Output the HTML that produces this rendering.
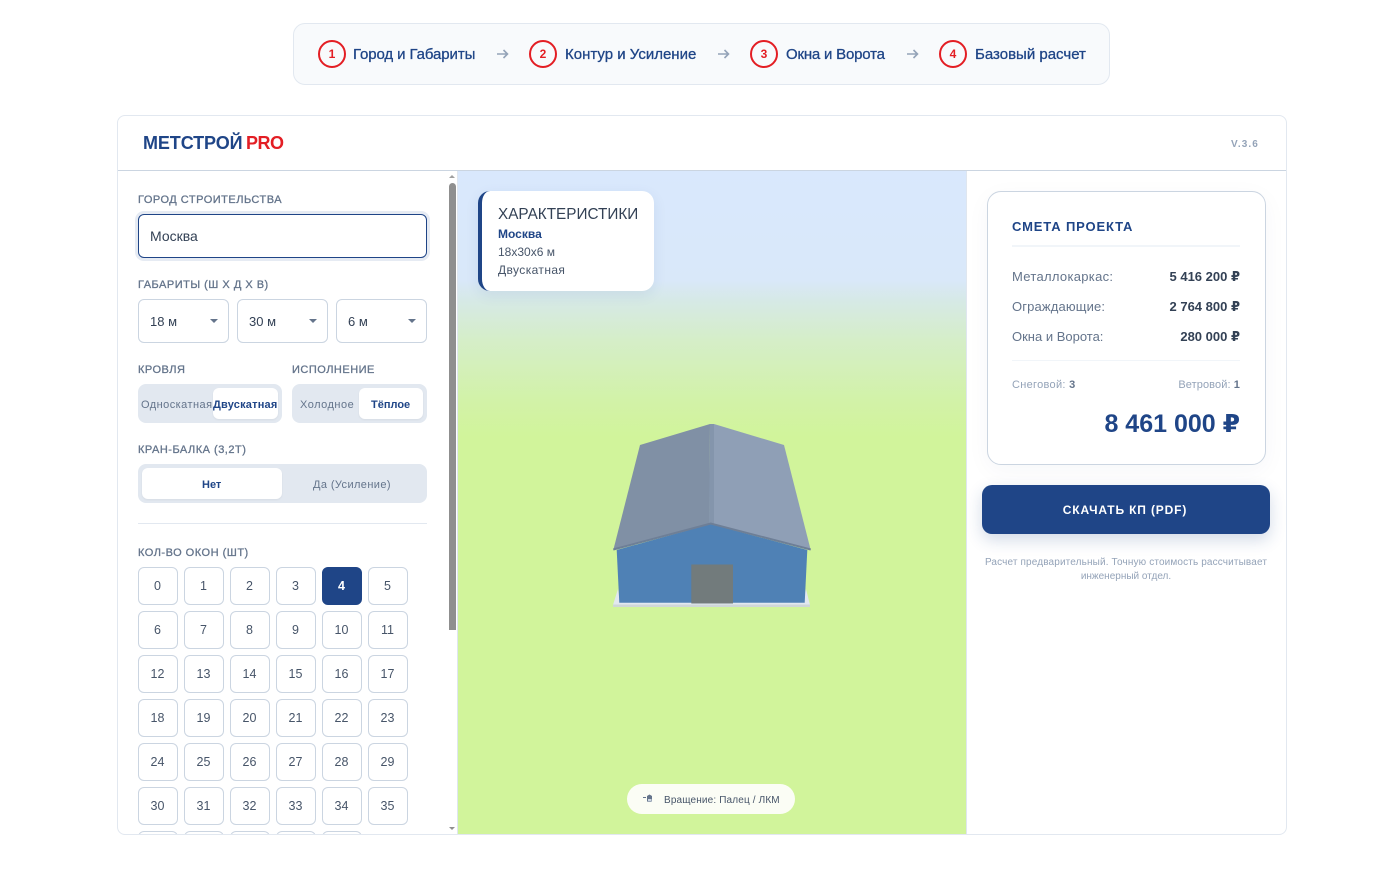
<!DOCTYPE html>
<html lang="ru"><head><meta charset="utf-8"><title>Метстрой PRO</title>
<style>
*{box-sizing:border-box}
html,body{margin:0;padding:0;background:#fff;width:1378px;height:870px;overflow:hidden;font-family:"Liberation Sans","DejaVu Sans",sans-serif}
.a{position:absolute}
.t{position:absolute;white-space:nowrap;line-height:16px;height:16px}
.lb{font-size:11px;color:#64748b;letter-spacing:.5px;-webkit-text-stroke:.3px #64748b}
.step{font-size:15px;color:#1f4587;-webkit-text-stroke:.3px #1f4587}
.c{position:absolute;top:40px;width:28px;height:28px;border:2px solid #e31e24;border-radius:50%;color:#e31e24;font-size:12px;font-weight:700;text-align:center;line-height:25px}
.sel{position:absolute;top:299px;width:91px;height:44px;border:1px solid #cbd5e1;border-radius:6px;background:#fff}
.sel span{position:absolute;left:11px;top:14px;font-size:13px;line-height:16px;color:#334155}
.sel i{position:absolute;left:71px;top:19px;border-left:4.5px solid transparent;border-right:4.5px solid transparent;border-top:4.5px solid #64748b}
.tg{position:absolute;background:#e2e8f0;border-radius:8px;height:39px}
.on{position:absolute;background:#fff;border-radius:6px;height:31px;box-shadow:0 1px 2px rgba(0,0,0,.05)}
.g{position:absolute;width:40px;height:38px;border:1px solid #cbd5e1;border-radius:6px;background:#fff;text-align:center;line-height:36px;font-size:12.5px;color:#475569;padding-right:1px}
.g.s{background:#1f4587;border-color:#1f4587;color:#fff;font-weight:700}
.rl{font-size:13px;color:#64748b;left:1012px;letter-spacing:.15px}
.rv{font-size:13px;color:#334155;font-weight:700;right:138px}
</style></head><body>

<div class="a" style="left:293px;top:23px;width:817px;height:62px;background:#f8fafc;border:1px solid #e2e8f0;border-radius:12px"></div>
<div class="c" style="left:318px">1</div><div class="t step" style="left:353px;top:47px;letter-spacing:-.1px">Город и Габариты</div>
<div class="c" style="left:529px">2</div><div class="t step" style="left:565px;top:47px">Контур и Усиление</div>
<div class="c" style="left:750px">3</div><div class="t step" style="left:786px;top:47px;letter-spacing:-.2px">Окна и Ворота</div>
<div class="c" style="left:939px">4</div><div class="t step" style="left:975px;top:47px">Базовый расчет</div>
<svg class="a" style="left:0;top:0" width="1378" height="90" fill="none" stroke="#94a3b8" stroke-width="1.6"><path d="M497 54h10.500M503.500 50l4 4-4 4M718 54h10.500M724.500 50l4 4-4 4M907 54h10.500M913.500 50l4 4-4 4"/></svg>

<div class="a" style="left:117px;top:115px;width:1170px;height:720px;background:#fff;border:1px solid #e2e8f0;border-radius:8px;overflow:hidden">
  <div class="a" style="left:0;top:54px;width:1168px;height:1px;background:#cbd5e1"></div>
  <div class="a" style="left:339px;top:55px;width:510px;height:664px;background:linear-gradient(180deg,#d9e8fd 0,#d9e8f9 16.500%,#d6e9e6 19.500%,#d5eec8 25.500%,#d2f2a8 34.500%,#d1f49b 40%,#d1f49b 100%);border-left:1px solid #dfe6ef;border-right:1px solid #dfe6ef"></div>
</div>

<div class="t" style="left:143px;top:132px;height:22px;line-height:22px;font-size:18px;font-weight:700;color:#1f4587;letter-spacing:-.1px">МЕТСТРОЙ</div>
<div class="t" style="left:246px;top:132px;height:22px;line-height:22px;font-size:18px;font-weight:700;color:#e31e24;letter-spacing:-.5px">PRO</div>
<div class="t" style="left:1231px;top:137px;font-size:10px;font-weight:700;color:#94a3b8;letter-spacing:1.1px">V.3.6</div>

<div class="t lb" style="left:138px;top:192px">ГОРОД СТРОИТЕЛЬСТВА</div>
<div class="a" style="left:138px;top:214px;width:289px;height:44px;border:1.500px solid #1f4587;border-radius:6px;background:#fff;box-shadow:0 0 0 3px #e6ebf3"></div>
<div class="t" style="left:150px;top:228px;font-size:14px;color:#334155">Москва</div>

<div class="t lb" style="left:138px;top:277px">ГАБАРИТЫ (Ш Х Д Х В)</div>
<div class="sel" style="left:138px"><span>18 м</span><i></i></div>
<div class="sel" style="left:237px"><span>30 м</span><i></i></div>
<div class="sel" style="left:336px"><span>6 м</span><i></i></div>

<div class="t lb" style="left:138px;top:362px">КРОВЛЯ</div>
<div class="t lb" style="left:292px;top:362px">ИСПОЛНЕНИЕ</div>
<div class="tg" style="left:138px;top:384px;width:144px"></div>
<div class="on" style="left:213px;top:388px;width:65px"></div>
<div class="t" style="left:141px;top:397px;font-size:11px;color:#64748b;letter-spacing:.45px">Односкатная</div>
<div class="t" style="left:213px;top:397px;font-size:11px;font-weight:700;color:#1f4587;letter-spacing:.2px">Двускатная</div>
<div class="tg" style="left:292px;top:384px;width:135px"></div>
<div class="on" style="left:359px;top:388px;width:64px"></div>
<div class="t" style="left:300px;top:397px;font-size:11px;color:#64748b;letter-spacing:.5px">Холодное</div>
<div class="t" style="left:371px;top:397px;font-size:11px;font-weight:700;color:#1f4587">Тёплое</div>

<div class="t lb" style="left:138px;top:442px">КРАН-БАЛКА (3,2Т)</div>
<div class="tg" style="left:138px;top:464px;width:289px"></div>
<div class="on" style="left:142px;top:468px;width:140px"></div>
<div class="t" style="left:202px;top:477px;font-size:11px;font-weight:700;color:#1f4587">Нет</div>
<div class="t" style="left:313px;top:477px;font-size:11px;color:#64748b;letter-spacing:.4px">Да (Усиление)</div>
<div class="a" style="left:138px;top:523px;width:289px;height:1px;background:#e2e8f0"></div>
<div class="t lb" style="left:138px;top:545px">КОЛ-ВО ОКОН (ШТ)</div>

<div class="a" style="left:0;top:560px;width:448px;height:274px;overflow:hidden">
<div class="g" style="left:138px;top:7px">0</div><div class="g" style="left:184px;top:7px">1</div><div class="g" style="left:230px;top:7px">2</div><div class="g" style="left:276px;top:7px">3</div><div class="g s" style="left:322px;top:7px">4</div><div class="g" style="left:368px;top:7px">5</div>
<div class="g" style="left:138px;top:51px">6</div><div class="g" style="left:184px;top:51px">7</div><div class="g" style="left:230px;top:51px">8</div><div class="g" style="left:276px;top:51px">9</div><div class="g" style="left:322px;top:51px">10</div><div class="g" style="left:368px;top:51px">11</div>
<div class="g" style="left:138px;top:95px">12</div><div class="g" style="left:184px;top:95px">13</div><div class="g" style="left:230px;top:95px">14</div><div class="g" style="left:276px;top:95px">15</div><div class="g" style="left:322px;top:95px">16</div><div class="g" style="left:368px;top:95px">17</div>
<div class="g" style="left:138px;top:139px">18</div><div class="g" style="left:184px;top:139px">19</div><div class="g" style="left:230px;top:139px">20</div><div class="g" style="left:276px;top:139px">21</div><div class="g" style="left:322px;top:139px">22</div><div class="g" style="left:368px;top:139px">23</div>
<div class="g" style="left:138px;top:183px">24</div><div class="g" style="left:184px;top:183px">25</div><div class="g" style="left:230px;top:183px">26</div><div class="g" style="left:276px;top:183px">27</div><div class="g" style="left:322px;top:183px">28</div><div class="g" style="left:368px;top:183px">29</div>
<div class="g" style="left:138px;top:227px">30</div><div class="g" style="left:184px;top:227px">31</div><div class="g" style="left:230px;top:227px">32</div><div class="g" style="left:276px;top:227px">33</div><div class="g" style="left:322px;top:227px">34</div><div class="g" style="left:368px;top:227px">35</div>
<div class="g" style="left:138px;top:271px"></div><div class="g" style="left:184px;top:271px"></div><div class="g" style="left:230px;top:271px"></div><div class="g" style="left:276px;top:271px"></div><div class="g" style="left:322px;top:271px"></div>
</div>

<div class="a" style="left:449px;top:183px;width:7px;height:447px;background:#8f8f8f;border-radius:3.500px 3.500px 0 0"></div>
<div class="a" style="left:449px;top:175px;border-left:3.500px solid transparent;border-right:3.500px solid transparent;border-bottom:3.500px solid #a0a0a0"></div>
<div class="a" style="left:449px;top:827px;border-left:3.500px solid transparent;border-right:3.500px solid transparent;border-top:3.500px solid #8f8f8f"></div>

<div class="a" style="left:478px;top:191px;width:176px;height:100px;background:#fff;border-left:4px solid #1f4587;border-radius:12px;box-shadow:0 4px 14px rgba(30,60,110,.08)"></div>
<div class="t" style="left:498px;top:207px;font-size:15.300px;color:#334155">ХАРАКТЕРИСТИКИ</div>
<div class="t" style="left:498px;top:226px;font-size:12px;font-weight:700;color:#1f4587">Москва</div>
<div class="t" style="left:498px;top:244px;font-size:12px;color:#475569">18х30х6 м</div>
<div class="t" style="left:498px;top:262px;font-size:12px;color:#475569;letter-spacing:.4px">Двускатная</div>

<svg class="a" style="left:590px;top:410px" width="240" height="210" viewBox="590 410 240 210">
<polygon points="618,589 620,601 803,601 806,589 810,605 613,605" fill="#e2e8f0"/>
<rect x="613" y="604.500" width="197" height="2.500" fill="#cfd7d8"/>
<polygon points="616.700,550 710.700,524 807.300,550 804.700,602.700 619.300,602.700" fill="#4f81b5"/>
<rect x="691.300" y="564.500" width="41.700" height="39" fill="#727b7c"/>
<polygon points="640,445 710,424 709.300,524 613.300,550" fill="#8090a5"/>
<polygon points="714,424 784,445 810.700,550 714,524" fill="#8f9fb6"/>
<polygon points="710,424 714,424 714,523.500 709,523.500" fill="#8495ac"/>
<polyline points="613.300,549.500 710.700,523.500 810.700,549.500" fill="none" stroke="#6e7f97" stroke-width="2"/>
</svg>

<div class="a" style="left:627px;top:784px;width:168px;height:30px;border-radius:15px;background:#fbfdf5"></div>
<svg class="a" style="left:642px;top:793px" width="13" height="12" viewBox="0 0 13 12"><path d="M1 4.500h3" stroke="#64748b" stroke-width="1"/><path d="M5 3l2.500-1.500L10 3v4.500a1.500 1.500 0 0 1-1.500 1.500h-2A1.500 1.500 0 0 1 5 7.500z" fill="#64748b"/><rect x="6" y="6" width="3.500" height="2.500" fill="#cbd5e1"/></svg>
<div class="t" style="left:664px;top:793px;font-size:10px;color:#475569;letter-spacing:.15px">Вращение: Палец / ЛКМ</div>

<div class="a" style="left:987px;top:191px;width:279px;height:274px;background:#fff;border:1px solid #cbd5e1;border-radius:14px;box-shadow:0 6px 24px rgba(30,60,110,.04)"></div>
<div class="t" style="left:1012px;top:219px;font-size:13px;font-weight:700;color:#1f4587;letter-spacing:.85px">СМЕТА ПРОЕКТА</div>
<div class="a" style="left:1012px;top:245px;width:228px;height:2px;background:#f1f5f9"></div>
<div class="t rl" style="top:269px;letter-spacing:.3px">Металлокаркас:</div><div class="t rv" style="top:269px">5 416 200 ₽</div>
<div class="t rl" style="top:299px">Ограждающие:</div><div class="t rv" style="top:299px">2 764 800 ₽</div>
<div class="t rl" style="top:329px;letter-spacing:0">Окна и Ворота:</div><div class="t rv" style="top:329px">280 000 ₽</div>
<div class="a" style="left:1012px;top:360px;width:228px;height:1px;background:#f1f5f9"></div>
<div class="t" style="left:1012px;top:377px;font-size:11px;color:#94a3b8;letter-spacing:.3px">Снеговой: <b style="color:#64748b">3</b></div>
<div class="t" style="right:138px;top:377px;font-size:11px;color:#94a3b8;letter-spacing:.1px">Ветровой: <b style="color:#64748b">1</b></div>
<div class="t" style="right:138px;top:410px;height:28px;line-height:28px;font-size:25px;font-weight:700;color:#1f4587">8 461 000 ₽</div>

<div class="a" style="left:982px;top:485px;width:288px;height:49px;background:#1f4587;border-radius:10px;box-shadow:0 6px 16px rgba(31,69,135,.2)"></div>
<div class="t" style="left:981px;width:288px;text-align:center;top:502px;font-size:12px;font-weight:700;color:#fff;letter-spacing:.85px">СКАЧАТЬ КП (PDF)</div>
<div class="t" style="left:982px;width:288px;text-align:center;top:555px;font-size:10px;color:#94a3b8;letter-spacing:.14px">Расчет предварительный. Точную стоимость рассчитывает</div>
<div class="t" style="left:982px;width:288px;text-align:center;top:569px;font-size:10px;color:#94a3b8">инженерный отдел.</div>
</body></html>
